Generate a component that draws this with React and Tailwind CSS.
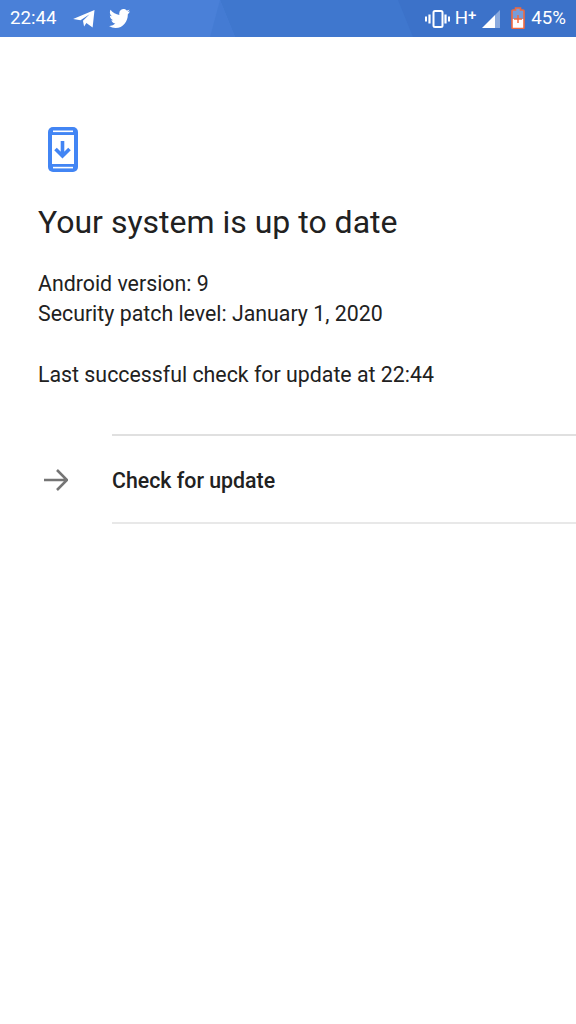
import React from 'react';

const StatusBar = () => (
    <div className="relative flex h-[37px] items-center justify-between overflow-hidden bg-[#4a80d8] pl-[10px] pr-[10px] text-white">
        {/* wallpaper facets behind the bar */}
        <svg className="absolute inset-0" width="576" height="37" viewBox="0 0 576 37">
            <polygon points="220,0 576,0 576,37 235,37" fill="#3f77ce" />
            <polygon points="220,0 235,37 210,37" fill="#447bd3" />
            <polygon points="398,0 576,0 576,37 413,37" fill="#3c72c9" />
        </svg>
        <div className="relative flex items-center">
            <span className="text-[18.67px] leading-none">22:44</span>
            <svg className="ml-[17px]" width="22" height="18" viewBox="0 0 23 19" fill="#fff">
                <path d="M0 9.600 22.600 0 20.600 18.400 14 13.600 11.600 17.400 10.400 11.400 17.400 4.600 7.800 10.800Z" />
            </svg>
            <svg className="ml-[14px]" width="21" height="19" viewBox="0 0 24 20" fill="#fff" preserveAspectRatio="none">
                <path d="M24 2.400c-.9.400-1.800.700-2.800.800 1-.600 1.800-1.600 2.200-2.700-1 .600-2 1-3.100 1.200A4.900 4.900 0 0 0 11.900 6.200C7.800 6 4.200 4 1.700.900.400 3.200 1 6.100 3.200 7.500c-.800 0-1.600-.200-2.200-.600 0 2.400 1.700 4.400 3.900 4.900-.700.200-1.500.200-2.200.100.600 2 2.400 3.400 4.600 3.400A9.900 9.900 0 0 1 0 17.800 14 14 0 0 0 7.500 20c9.100 0 14.300-7.700 14-14.600 1-.700 1.800-1.600 2.500-3Z" />
            </svg>
        </div>
        <div className="relative flex items-center">
            <svg width="25" height="18" viewBox="0 0 25 18" fill="none" stroke="#fff" strokeWidth="2">
                <rect x="8.500" y="1" width="9" height="16" rx="1.500" />
                <path d="M4.500 4.500v9M20.500 4.500v9" strokeWidth="2.200" />
                <path d="M1 6.500v5M24 6.500v5" strokeWidth="2" />
            </svg>
            <span className="ml-[5px] text-[18.67px] leading-none">H</span>
            <span className="mb-[6px] text-[15px] font-medium leading-none">+</span>
            <svg className="ml-[6px]" width="18" height="18" viewBox="0 0 18 18">
                <polygon points="0,18 13,5 13,18" fill="#fff" />
                <polygon points="13,5 18,0 18,18 13,18" fill="#fff" fillOpacity="0.4" />
            </svg>
            <svg className="ml-[11px] mb-[1px]" width="14" height="22" viewBox="0 0 14 22">
                <path d="M1 4a1 1 0 0 1 1-1h2.500V1h5V3H12a1 1 0 0 1 1 1v16.500a1 1 0 0 1-1 1H2a1 1 0 0 1-1-1Z" fill="#fff" fillOpacity="0.3" />
                <path d="M1 12h12v8.500a1 1 0 0 1-1 1H2a1 1 0 0 1-1-1Z" fill="#fff" />
                <path d="M1 4a1 1 0 0 1 1-1h2.500V1h5V3H12a1 1 0 0 1 1 1v16.500a1 1 0 0 1-1 1H2a1 1 0 0 1-1-1Z" fill="none" stroke="#f0693f" strokeWidth="1.600" />
                <path d="M7 8v8M3 12h8" stroke="#f0693f" strokeWidth="1.500" />
            </svg>
            <span className="ml-[6px] text-[18.67px] leading-none">45%</span>
        </div>
    </div>
);

const App = () => {
    return (
        <div className="min-h-[1024px] bg-white font-['Roboto',sans-serif] text-[#212121]">
            <StatusBar />

            <div className="px-[38px] pt-[90px]">
                <svg className="ml-[10px] block" width="30" height="45" viewBox="0 0 30 45" fill="none">
                    <rect x="0" y="0" width="30" height="45" rx="5" fill="#4285f4" />
                    <rect x="4" y="8" width="22" height="29" fill="#fff" />
                    <rect x="5" y="3.500" width="20" height="1.600" fill="#fff" />
                    <rect x="5" y="39.800" width="20" height="1.600" fill="#fff" />
                    <path d="M14.500 14v15M7.500 22l7 7 7-7" stroke="#4285f4" strokeWidth="3.600" />
                </svg>
                <h1 className="mt-[30px] text-[32px] font-normal leading-[40px]">Your system is up to date</h1>
                <div className="mt-[27px] text-[21.33px] leading-[30px]">
                    <p>Android version: 9</p>
                    <p>Security patch level: January 1, 2020</p>
                </div>
                <p className="mt-[31px] text-[21.33px] leading-[30px]">Last successful check for update at 22:44</p>
            </div>

            <div className="mt-[44px] flex">
                <div className="flex w-[112px] items-center pl-[44px] pt-[2px]">
                    <svg width="24" height="22" viewBox="0 0 24 22" fill="none" stroke="#757575" strokeWidth="2.600">
                        <path d="M0 11h23M13 1l10 10-10 10" />
                    </svg>
                </div>
                <div className="flex h-[90px] flex-1 items-center border-y-2 border-t-[#e0e0e0] border-b-[#e8e8e8] pt-[3px] text-[21.33px] font-medium">
                    Check for update
                </div>
            </div>
        </div>
    );
};

export default App;
